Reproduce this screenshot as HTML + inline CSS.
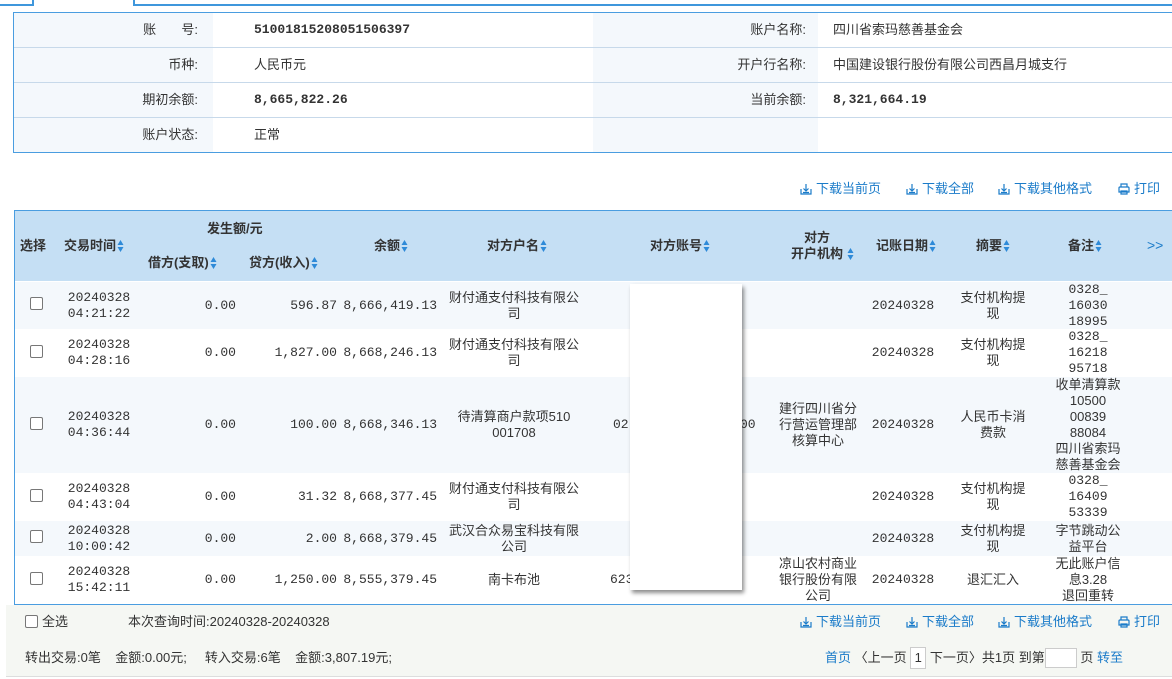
<!DOCTYPE html>
<html><head><meta charset="utf-8"><style>
*{margin:0;padding:0;box-sizing:border-box}
body{width:1172px;height:679px;overflow:hidden;background:#fff;font-family:"Liberation Sans","Noto Sans CJK SC",sans-serif;font-size:13px;color:#333;position:relative}
.a{position:absolute}
.m{font-family:"Liberation Mono","Noto Sans CJK SC",monospace}
.c{position:absolute;display:flex;align-items:center;line-height:16px}
.cc{justify-content:center;text-align:center}
.cr{justify-content:flex-end;text-align:right}
.bl{color:#1a7bc9}
.cb{position:absolute;width:13px;height:13px;border:1px solid #777;border-radius:2px;background:#fff}
.hd{font-weight:bold;color:#333}
.ar{display:inline-block;width:7px;height:14px;vertical-align:-2px;margin-left:1px}
.ic{width:12px;height:12px;margin-right:4px}
</style></head><body>
<svg width="0" height="0" style="position:absolute"><defs>
<symbol id="s" viewBox="0 0 7 14"><path d="M3.5 1 L6.5 6 L0.5 6Z M3.5 13 L6.5 8 L0.5 8Z" fill="#2e8ad8"/></symbol>
<symbol id="d" viewBox="0 0 12 12"><path d="M1 6v5h10V6M6 1v7M3.5 5.5L6 8l2.5-2.5M3 9.5h6" fill="none" stroke="#1a7bc9" stroke-width="1.2"/></symbol>
<symbol id="p" viewBox="0 0 12 12"><path d="M3 4V1h6v3M2 4h8a1 1 0 0 1 1 1v4H1V5a1 1 0 0 1 1-1zM3 8h6v3H3z" fill="none" stroke="#1a7bc9" stroke-width="1.2"/></symbol>
</defs></svg>
<div class="a" style="left:0;top:0;width:34px;height:6px;border-right:2px solid #3f97dc;border-bottom:2px solid #3f97dc"></div>
<div class="a" style="left:133px;top:0;width:1040px;height:6px;border-left:2px solid #3f97dc;border-bottom:2px solid #3f97dc"></div>

<div class="a" style="left:13px;top:12px;width:1170px;height:141px;border:1px solid #4a9de0;background:#f4f8fc"></div>
<div class="a" style="left:213px;top:13px;width:380px;height:139px;background:#fff"></div>
<div class="a" style="left:818px;top:13px;width:360px;height:139px;background:#fff"></div>
<div class="a" style="left:14px;top:47px;width:1160px;height:1px;background:#c7d9ea"></div>
<div class="a" style="left:14px;top:82px;width:1160px;height:1px;background:#c7d9ea"></div>
<div class="a" style="left:14px;top:117px;width:1160px;height:1px;background:#c7d9ea"></div>
<div class="c cr" style="left:20px;top:22px;width:178px;height:16px">账&nbsp;&nbsp;&nbsp;&nbsp;&nbsp;&nbsp;&nbsp;号:</div>
<div class="c cr" style="left:20px;top:57px;width:178px;height:16px">币种:</div>
<div class="c cr" style="left:20px;top:92px;width:178px;height:16px">期初余额:</div>
<div class="c cr" style="left:20px;top:127px;width:178px;height:16px">账户状态:</div>
<div class="c m" style="left:254px;top:22px;font-weight:bold;height:16px">51001815208051506397</div>
<div class="c" style="left:254px;top:57px;height:16px">人民币元</div>
<div class="c m" style="left:254px;top:92px;font-weight:bold;height:16px">8,665,822.26</div>
<div class="c" style="left:254px;top:127px;height:16px">正常</div>
<div class="c cr" style="left:600px;top:22px;width:206px;height:16px">账户名称:</div>
<div class="c cr" style="left:600px;top:57px;width:206px;height:16px">开户行名称:</div>
<div class="c cr" style="left:600px;top:92px;width:206px;height:16px">当前余额:</div>
<div class="c" style="left:833px;top:22px;height:16px">四川省索玛慈善基金会</div>
<div class="c" style="left:833px;top:57px;height:16px">中国建设银行股份有限公司西昌月城支行</div>
<div class="c m" style="left:833px;top:92px;font-weight:bold;height:16px">8,321,664.19</div>

<div class="c bl" style="left:800px;top:181px;height:16px"><svg class="ic"><use href="#d"/></svg>下载当前页</div>
<div class="c bl" style="left:906px;top:181px;height:16px"><svg class="ic"><use href="#d"/></svg>下载全部</div>
<div class="c bl" style="left:998px;top:181px;height:16px"><svg class="ic"><use href="#d"/></svg>下载其他格式</div>
<div class="c bl" style="left:1118px;top:181px;height:16px"><svg class="ic"><use href="#p"/></svg>打印</div>

<div class="a" style="left:14px;top:210px;width:1170px;height:395px;border:1px solid #4a9de0;border-right:none;background:#fff"></div>
<div class="a" style="left:15px;top:211px;width:1160px;height:70px;background:#c5dff4"></div>
<div class="a" style="left:15px;top:282px;width:1160px;height:47px;background:#f4f8fc"></div>
<div class="a" style="left:15px;top:377px;width:1160px;height:96px;background:#f4f8fc"></div>
<div class="a" style="left:15px;top:521px;width:1160px;height:35px;background:#f4f8fc"></div>

<div class="c hd" style="left:20px;top:238px;height:16px">选择</div>
<div class="c hd" style="left:64px;top:238px;height:16px">交易时间<svg class="ar"><use href="#s"/></svg></div>
<div class="c hd" style="left:207px;top:221px;height:16px">发生额/元</div>
<div class="c hd" style="left:148px;top:255px;height:16px">借方(支取)<svg class="ar"><use href="#s"/></svg></div>
<div class="c hd" style="left:249px;top:255px;height:16px">贷方(收入)<svg class="ar"><use href="#s"/></svg></div>
<div class="c hd" style="left:374px;top:238px;height:16px">余额<svg class="ar"><use href="#s"/></svg></div>
<div class="c hd" style="left:487px;top:238px;height:16px">对方户名<svg class="ar"><use href="#s"/></svg></div>
<div class="c hd" style="left:650px;top:238px;height:16px">对方账号<svg class="ar"><use href="#s"/></svg></div>
<div class="c hd cc" style="left:782px;top:230px;width:70px;height:32px">对方<br>开户机构</div>
<div class="a" style="left:846px;top:247px"><svg class="ar"><use href="#s"/></svg></div>
<div class="c hd" style="left:876px;top:238px;height:16px">记账日期<svg class="ar"><use href="#s"/></svg></div>
<div class="c hd" style="left:976px;top:238px;height:16px">摘要<svg class="ar"><use href="#s"/></svg></div>
<div class="c hd" style="left:1068px;top:238px;height:16px">备注<svg class="ar"><use href="#s"/></svg></div>
<div class="c bl" style="left:1147px;top:237px;height:16px;font-size:14px">&gt;&gt;</div>

<div class="cb" style="left:30px;top:297px"></div>
<div class="c cc m" style="left:60px;top:282px;width:78px;height:47px">20240328<br>04:21:22</div>
<div class="c cr m" style="left:140px;top:282px;width:96px;height:47px">0.00</div>
<div class="c cr m" style="left:240px;top:282px;width:97px;height:47px">596.87</div>
<div class="c cr m" style="left:340px;top:282px;width:97px;height:47px">8,666,419.13</div>
<div class="c cc" style="left:446px;top:282px;width:136px;height:47px">财付通支付科技有限公司</div>
<div class="c cc m" style="left:866px;top:282px;width:74px;height:47px">20240328</div>
<div class="c cc" style="left:958px;top:282px;width:70px;height:47px">支付机构提现</div>
<div class="c cc m" style="left:1050px;top:282px;width:76px;height:47px">0328_<br>16030<br>18995</div>

<div class="cb" style="left:30px;top:345px"></div>
<div class="c cc m" style="left:60px;top:329px;width:78px;height:48px">20240328<br>04:28:16</div>
<div class="c cr m" style="left:140px;top:329px;width:96px;height:48px">0.00</div>
<div class="c cr m" style="left:240px;top:329px;width:97px;height:48px">1,827.00</div>
<div class="c cr m" style="left:340px;top:329px;width:97px;height:48px">8,668,246.13</div>
<div class="c cc" style="left:446px;top:329px;width:136px;height:48px">财付通支付科技有限公司</div>
<div class="c cc m" style="left:866px;top:329px;width:74px;height:48px">20240328</div>
<div class="c cc" style="left:958px;top:329px;width:70px;height:48px">支付机构提现</div>
<div class="c cc m" style="left:1050px;top:329px;width:76px;height:48px">0328_<br>16218<br>95718</div>

<div class="cb" style="left:30px;top:417px"></div>
<div class="c cc m" style="left:60px;top:377px;width:78px;height:96px">20240328<br>04:36:44</div>
<div class="c cr m" style="left:140px;top:377px;width:96px;height:96px">0.00</div>
<div class="c cr m" style="left:240px;top:377px;width:97px;height:96px">100.00</div>
<div class="c cr m" style="left:340px;top:377px;width:97px;height:96px">8,668,346.13</div>
<div class="c cc" style="left:446px;top:377px;width:136px;height:96px">待清算商户款项510<br>001708</div>
<div class="c m" style="left:613px;top:377px;height:96px">02</div>
<div class="c m" style="left:740px;top:377px;height:96px">00</div>
<div class="c cc" style="left:776px;top:377px;width:84px;height:96px">建行四川省分行营运管理部核算中心</div>
<div class="c cc m" style="left:866px;top:377px;width:74px;height:96px">20240328</div>
<div class="c cc" style="left:958px;top:377px;width:70px;height:96px">人民币卡消费款</div>
<div class="c cc" style="left:1046px;top:377px;width:84px;height:96px">收单清算款<br>10500<br>00839<br>88084<br>四川省索玛<br>慈善基金会</div>

<div class="cb" style="left:30px;top:489px"></div>
<div class="c cc m" style="left:60px;top:473px;width:78px;height:48px">20240328<br>04:43:04</div>
<div class="c cr m" style="left:140px;top:473px;width:96px;height:48px">0.00</div>
<div class="c cr m" style="left:240px;top:473px;width:97px;height:48px">31.32</div>
<div class="c cr m" style="left:340px;top:473px;width:97px;height:48px">8,668,377.45</div>
<div class="c cc" style="left:446px;top:473px;width:136px;height:48px">财付通支付科技有限公司</div>
<div class="c cc m" style="left:866px;top:473px;width:74px;height:48px">20240328</div>
<div class="c cc" style="left:958px;top:473px;width:70px;height:48px">支付机构提现</div>
<div class="c cc m" style="left:1050px;top:473px;width:76px;height:48px">0328_<br>16409<br>53339</div>

<div class="cb" style="left:30px;top:530px"></div>
<div class="c cc m" style="left:60px;top:521px;width:78px;height:35px">20240328<br>10:00:42</div>
<div class="c cr m" style="left:140px;top:521px;width:96px;height:35px">0.00</div>
<div class="c cr m" style="left:240px;top:521px;width:97px;height:35px">2.00</div>
<div class="c cr m" style="left:340px;top:521px;width:97px;height:35px">8,668,379.45</div>
<div class="c cc" style="left:446px;top:521px;width:136px;height:35px">武汉合众易宝科技有限公司</div>
<div class="c cc m" style="left:866px;top:521px;width:74px;height:35px">20240328</div>
<div class="c cc" style="left:958px;top:521px;width:70px;height:35px">支付机构提现</div>
<div class="c cc" style="left:1046px;top:521px;width:84px;height:35px">字节跳动公<br>益平台</div>

<div class="cb" style="left:30px;top:572px"></div>
<div class="c cc m" style="left:60px;top:556px;width:78px;height:48px">20240328<br>15:42:11</div>
<div class="c cr m" style="left:140px;top:556px;width:96px;height:48px">0.00</div>
<div class="c cr m" style="left:240px;top:556px;width:97px;height:48px">1,250.00</div>
<div class="c cr m" style="left:340px;top:556px;width:97px;height:48px">8,555,379.45</div>
<div class="c cc" style="left:446px;top:556px;width:136px;height:48px">南卡布池</div>
<div class="c m" style="left:610px;top:556px;height:48px">623</div>
<div class="c cc" style="left:776px;top:556px;width:84px;height:48px">凉山农村商业银行股份有限公司</div>
<div class="c cc m" style="left:866px;top:556px;width:74px;height:48px">20240328</div>
<div class="c cc" style="left:958px;top:556px;width:70px;height:48px">退汇汇入</div>
<div class="c cc" style="left:1046px;top:556px;width:84px;height:48px">无此账户信<br>息3.28<br>退回重转</div>

<div class="a" style="left:630px;top:284px;width:112px;height:306px;background:#fff;box-shadow:2px 3px 4px rgba(0,0,0,.45)"></div>

<div class="a" style="left:6px;top:605px;width:1170px;height:72px;background:#f5f7f3;border-bottom:1px solid #ddd"></div>
<div class="cb" style="left:25px;top:615px"></div>
<div class="c" style="left:42px;top:614px;height:16px">全选</div>
<div class="c" style="left:128px;top:614px;height:16px">本次查询时间:20240328-20240328</div>
<div class="c bl" style="left:800px;top:614px;height:16px"><svg class="ic"><use href="#d"/></svg>下载当前页</div>
<div class="c bl" style="left:906px;top:614px;height:16px"><svg class="ic"><use href="#d"/></svg>下载全部</div>
<div class="c bl" style="left:998px;top:614px;height:16px"><svg class="ic"><use href="#d"/></svg>下载其他格式</div>
<div class="c bl" style="left:1118px;top:614px;height:16px"><svg class="ic"><use href="#p"/></svg>打印</div>
<div class="c" style="left:25px;top:650px;height:16px">转出交易:0笔&nbsp;&nbsp;&nbsp;&nbsp;金额:0.00元;&nbsp;&nbsp;&nbsp;&nbsp;&nbsp;转入交易:6笔&nbsp;&nbsp;&nbsp;&nbsp;金额:3,807.19元;</div>
<div class="c" style="left:825px;top:650px;height:16px"><span class="bl">首页</span>&nbsp;〈上一页&nbsp;<span style="display:inline-block;border:1px solid #ccc;background:#fff;width:16px;text-align:center;line-height:20px">1</span>&nbsp;下一页〉共1页&nbsp;到第<span style="display:inline-block;border:1px solid #ccc;background:#fff;width:32px;height:20px;vertical-align:middle"></span>&nbsp;页&nbsp;<span class="bl">转至</span></div>
</body></html>
